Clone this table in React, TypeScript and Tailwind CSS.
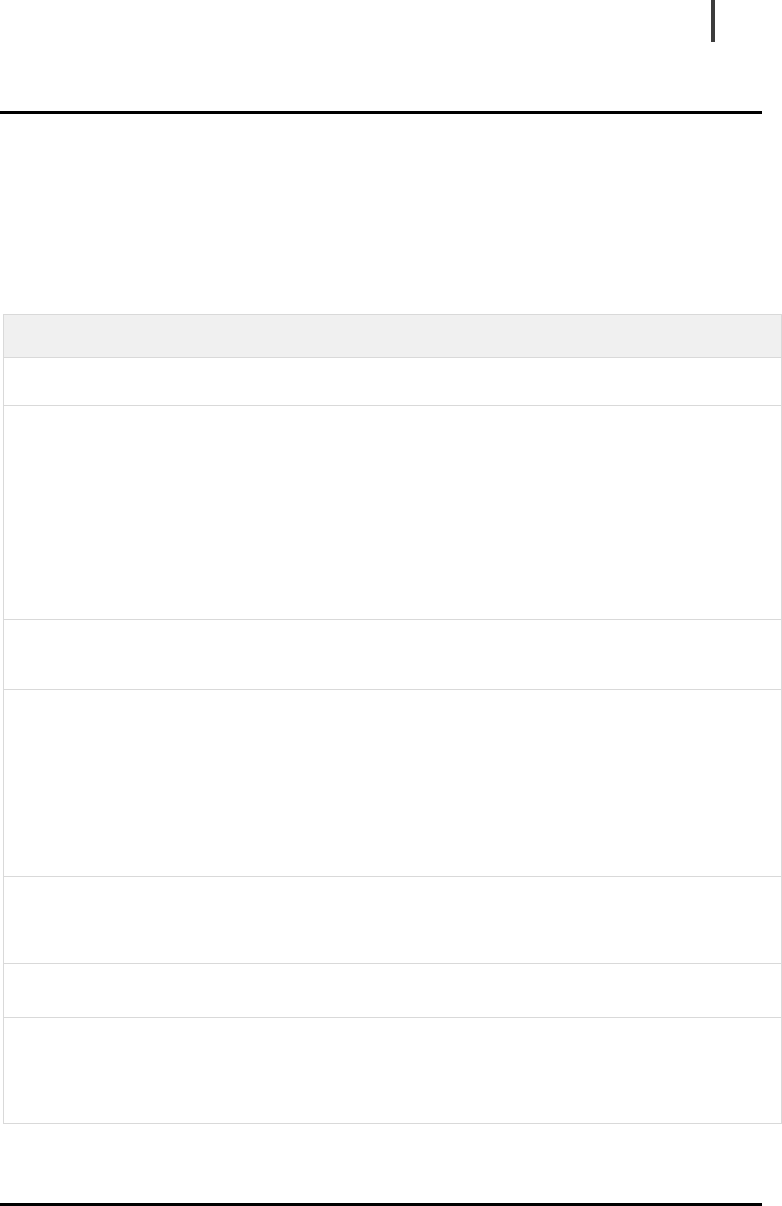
import React from "react";

const rows = [43, 48, 214, 70, 187, 87, 54, 106];

export default function App() {
  return (
    <div className="w-[782px] h-[1206px] bg-white flex flex-col font-['Liberation_Sans',sans-serif] overflow-hidden">
      <div className="h-[111px] flex">
        <div className="ml-[711px] w-[4px] h-[42px] bg-[#3c3c3c]" />
      </div>
      <div className="w-[762px] h-[3px] bg-black" />
      <div className="h-[200px]" />
      <div className="ml-[3px] w-[779px] border border-[#d9d9d9] flex flex-col">
        {rows.map((h, i) => (
          <div
            key={i}
            className={
              (i === 0 ? "bg-[#f0f0f0] " : "bg-white ") +
              (i < rows.length - 1 ? "border-b border-[#d9d9d9]" : "")
            }
            style={{ height: i === rows.length - 1 ? h - 1 : h }}
          />
        ))}
      </div>
      <div className="h-[79px]" />
      <div className="w-[762px] h-[3px] bg-black" />
    </div>
  );
}
